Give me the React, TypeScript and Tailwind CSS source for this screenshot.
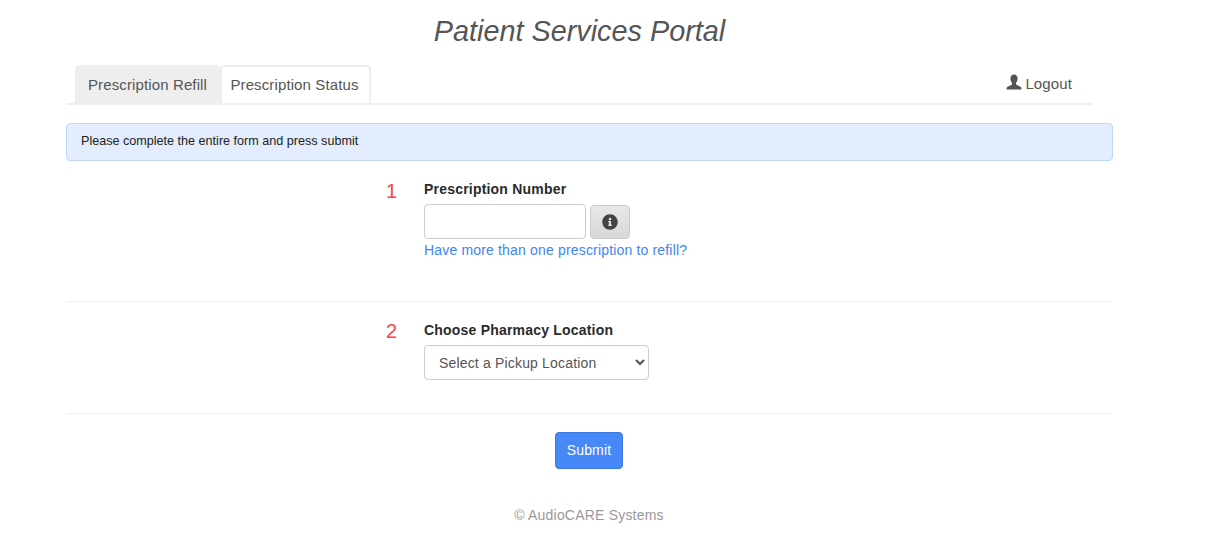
import React from "react";
import { FaInfoCircle } from "react-icons/fa";

export default function App() {
  return (
    <div className="w-full h-[557px] bg-white pl-[66px] overflow-hidden font-['Liberation_Sans',Arial,sans-serif] text-[#333]">
      <div className="w-[1026px]">
        <h1 className="h-[65px] pt-[13px] pl-[1px] text-center text-[28.8px] leading-[36px] italic font-normal text-[#555]">Patient Services Portal</h1>
        <div className="flex h-[40px] pl-[9px] border-b-2 border-[#eeeeee] text-[#555] text-[15px] tracking-[0.12px]">
          <div className="w-[145px] h-[38px] flex items-center justify-center pt-[2px] bg-[#eeeeee] rounded-t-[4px]">Prescription Refill</div>
          <div className="w-[151px] h-[38px] flex items-center justify-center pr-[2px] bg-white border-2 border-b-0 border-[#eeeeee] rounded-t-[4px]">Prescription Status</div>
          <div className="ml-auto mr-[20px] h-[38px] flex items-center gap-[3px] pt-[1px]">
            <svg width="16" height="16" viewBox="0 0 16 16" className="mb-[6px]" fill="#555">
              <path d="M8 0.5c2.300 0 3.600 1.700 3.600 4 0 1.800-.7 3.400-1.600 4.300v1.200c0 .8 1 1.100 2.400 1.700 1.500.6 3 1.100 3.100 2.800v1H.5v-1c.1-1.700 1.600-2.200 3.100-2.800C5 11.100 6 10.800 6 10V8.800C5.100 7.900 4.400 6.300 4.400 4.500c0-2.300 1.300-4 3.600-4z" />
            </svg>
            <span>Logout</span>
          </div>
        </div>
      </div>
      <div className="w-[1047px]">
        <div className="mt-[18px] h-[38px] flex items-center pl-[14px] pb-[2px] bg-[#e3edfd] border border-[#bfd7f8] rounded-[4px] text-[12.6px] text-[#222]">Please complete the entire form and press submit</div>
      </div>
      <div className="w-[1046px]">
        <div className="h-[141px] border-b border-[#eeeeee] pl-[320px] pt-[19px] flex">
          <div className="w-[38px] text-[20px] leading-[22px] text-[#ff4444]">1</div>
          <div>
            <div className="text-[14px] leading-[18px] font-bold text-[#2a2a2a] tracking-[0.2px]">Prescription Number</div>
            <div className="flex items-end gap-[4px] mt-[6px]">
              <input className="w-[162px] h-[35px] bg-white border border-[#cccccc] rounded-[4px]" />
              <button className="w-[40px] h-[34px] flex items-center justify-center bg-gradient-to-b from-[#e8e8e8] to-[#d8d8d8] border border-[#cccccc] rounded-[4px] text-[#444]">
                <FaInfoCircle className="w-[16px] h-[16px]" />
              </button>
            </div>
            <a className="block mt-[1px] text-[14px] leading-[20px] tracking-[0.17px] text-[#4285f4]">Have more than one prescription to refill?</a>
          </div>
        </div>
        <div className="h-[112px] border-b border-[#eeeeee] pl-[320px] pt-[18px] flex">
          <div className="w-[38px] text-[20px] leading-[22px] text-[#ff4444]">2</div>
          <div>
            <div className="text-[14px] leading-[20px] font-bold text-[#2a2a2a] tracking-[0.2px]">Choose Pharmacy Location</div>
            <select className="block mt-[5px] w-[225px] h-[35px] pl-[10px] bg-white border border-[#cccccc] rounded-[4px] text-[14px] tracking-[0.17px] text-[#555]">
              <option>Select a Pickup Location</option>
            </select>
          </div>
        </div>
        <div className="flex justify-center pt-[18px]">
          <button className="w-[68px] h-[37px] bg-[#4688f6] border border-[#3b78e0] rounded-[4px] text-white text-[14px] tracking-[0.15px]">Submit</button>
        </div>
        <div className="mt-[36px] text-center text-[14px] leading-[20px] tracking-[0.2px] text-[#999999]">© AudioCARE Systems</div>
      </div>
    </div>
  );
}
